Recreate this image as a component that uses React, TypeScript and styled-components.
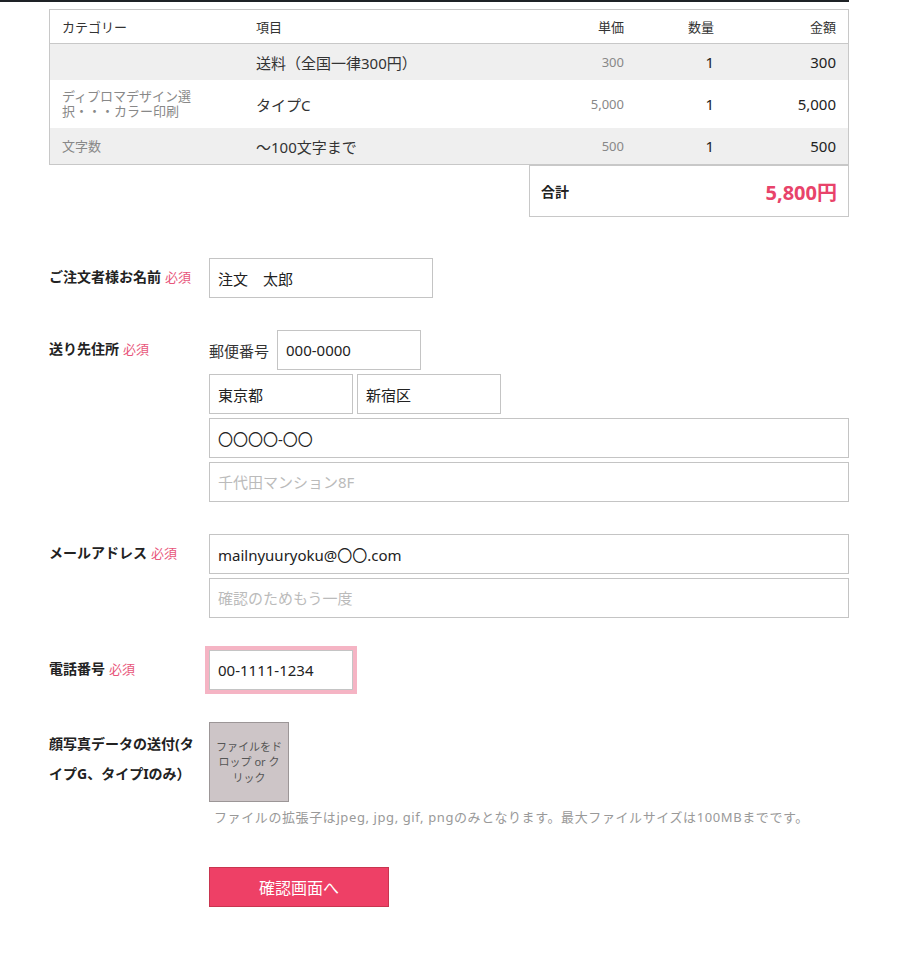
import React from "react";
import styled, { createGlobalStyle } from "styled-components";

const GlobalStyle = createGlobalStyle`
  html, body { margin: 0; padding: 0; background: #fff; }
  body {
    font-family: "Noto Sans", "Noto Sans CJK JP", sans-serif;
    color: #333;
  }
  * { box-sizing: border-box; }
`;

const Page = styled.div`
  border-top: 2px solid #1e2226;
  padding: 7px 0 57px 49px;
  width: 849px;
`;

const OrderTable = styled.div`
  width: 800px;
  border: 1px solid #c8c8c8;
`;

const GridRow = styled.div<{ $bg?: string; $h: number; $head?: boolean }>`
  display: grid;
  grid-template-columns: 194px 312px 80px 90px 1fr;
  align-items: center;
  min-height: ${(p) => p.$h}px;
  background: ${(p) => p.$bg || "#fff"};
  border-bottom: ${(p) => (p.$head ? "1px solid #c8c8c8" : "none")};
`;

const HeadCell = styled.div<{ $right?: boolean }>`
  padding: 0 12px;
  font-size: 13px;
  color: #333;
  text-align: ${(p) => (p.$right ? "right" : "left")};
`;

const CategoryCell = styled.div`
  padding: 8px 50px 8px 12px;
  font-size: 13px;
  line-height: 15px;
  color: #888;
`;

const ItemCell = styled.div`
  padding: 0 12px;
  font-size: 15px;
  color: #333;
`;

const PriceCell = styled.div`
  padding: 0 12px;
  font-size: 13px;
  color: #888;
  text-align: right;
`;

const NumCell = styled.div`
  padding: 0 12px;
  font-size: 15px;
  color: #222;
  text-align: right;
`;

const TotalBox = styled.div`
  width: 320px;
  height: 52px;
  margin-left: 480px;
  border: 1px solid #c8c8c8;
  display: flex;
  align-items: center;
  justify-content: space-between;
  padding: 0 11px;
`;

const TotalLabel = styled.span`
  font-size: 14px;
  font-weight: bold;
  color: #222;
`;

const TotalValue = styled.span`
  font-size: 20px;
  font-weight: bold;
  color: #e8436a;
`;

const Form = styled.form`
  margin-top: 41px;
  width: 800px;
`;

const FormRow = styled.div`
  display: flex;
  margin-bottom: 32px;
`;

const Label = styled.div<{ $pt?: number }>`
  width: 160px;
  flex-shrink: 0;
  padding: ${(p) => p.$pt ?? 4}px 8px 0 0;
  font-size: 14px;
  font-weight: bold;
  line-height: 30px;
  color: #222;
`;

const Required = styled.span`
  font-size: 13px;
  font-weight: normal;
  color: #e8557a;
  margin-left: 4px;
`;

const Fields = styled.div`
  display: flex;
  flex-direction: column;
  gap: 4px;
  flex: 1;
`;

const InlineFields = styled.div`
  display: flex;
  align-items: center;
  gap: 4px;
`;

const SubLabel = styled.span`
  font-size: 15px;
  color: #333;
  margin-right: 4px;
`;

const TextInput = styled.input<{ $w?: number; $highlight?: boolean }>`
  width: ${(p) => (p.$w ? `${p.$w}px` : "100%")};
  height: 40px;
  border: 1px solid #c4c4c4;
  border-radius: 0;
  padding: 0 8px;
  font-family: inherit;
  font-size: 15px;
  color: #222;
  background: #fff;
  outline: none;
  box-shadow: ${(p) => (p.$highlight ? "0 0 0 4px #f5b4c4" : "none")};
  &::placeholder { color: #bbb; }
`;

const DropBox = styled.div`
  width: 80px;
  height: 80px;
  background: #cdc5c7;
  border: 1px solid #9c9697;
  display: flex;
  align-items: center;
  justify-content: center;
  text-align: center;
  padding: 0 5px;
  font-size: 11px;
  line-height: 15.5px;
  color: #555;
  cursor: pointer;
`;

const Note = styled.p`
  margin: 0;
  padding-left: 5px;
  font-size: 13px;
  letter-spacing: 0.6px;
  line-height: 22px;
  color: #999;
`;

const SubmitRow = styled.div`
  padding: 7px 0 0 160px;
`;

const SubmitButton = styled.button`
  width: 180px;
  height: 40px;
  background: #ee4066;
  border: 1px solid #c8354f;
  color: #fff;
  font-family: inherit;
  font-size: 16px;
  cursor: pointer;
`;

const rows = [
  { cat: "", item: "送料（全国一律300円）", price: "300", qty: "1", amount: "300", bg: "#efefef", h: 36 },
  { cat: "ディプロマデザイン選択・・・カラー印刷", item: "タイプC", price: "5,000", qty: "1", amount: "5,000", bg: "#fff", h: 48 },
  { cat: "文字数", item: "〜100文字まで", price: "500", qty: "1", amount: "500", bg: "#efefef", h: 36 },
];

export default function App() {
  return (
    <>
      <GlobalStyle />
      <Page>
        <OrderTable>
          <GridRow $h={34} $head>
            <HeadCell>カテゴリー</HeadCell>
            <HeadCell>項目</HeadCell>
            <HeadCell $right>単価</HeadCell>
            <HeadCell $right>数量</HeadCell>
            <HeadCell $right>金額</HeadCell>
          </GridRow>
          {rows.map((r, i) => (
            <GridRow key={i} $bg={r.bg} $h={r.h}>
              <CategoryCell>{r.cat}</CategoryCell>
              <ItemCell>{r.item}</ItemCell>
              <PriceCell>{r.price}</PriceCell>
              <NumCell>{r.qty}</NumCell>
              <NumCell>{r.amount}</NumCell>
            </GridRow>
          ))}
        </OrderTable>
        <TotalBox>
          <TotalLabel>合計</TotalLabel>
          <TotalValue>5,800円</TotalValue>
        </TotalBox>

        <Form onSubmit={(e) => e.preventDefault()}>
          <FormRow>
            <Label>
              ご注文者様お名前<Required>必須</Required>
            </Label>
            <Fields>
              <TextInput $w={224} defaultValue="注文　太郎" />
            </Fields>
          </FormRow>

          <FormRow>
            <Label>
              送り先住所<Required>必須</Required>
            </Label>
            <Fields>
              <InlineFields>
                <SubLabel>郵便番号</SubLabel>
                <TextInput $w={144} defaultValue="000-0000" />
              </InlineFields>
              <InlineFields>
                <TextInput $w={144} defaultValue="東京都" />
                <TextInput $w={144} defaultValue="新宿区" />
              </InlineFields>
              <TextInput defaultValue="〇〇〇〇-〇〇" />
              <TextInput placeholder="千代田マンション8F" />
            </Fields>
          </FormRow>

          <FormRow>
            <Label>
              メールアドレス<Required>必須</Required>
            </Label>
            <Fields>
              <TextInput defaultValue="mailnyuuryoku@〇〇.com" />
              <TextInput placeholder="確認のためもう一度" />
            </Fields>
          </FormRow>

          <FormRow>
            <Label>
              電話番号<Required>必須</Required>
            </Label>
            <Fields>
              <TextInput $w={144} $highlight defaultValue="00-1111-1234" />
            </Fields>
          </FormRow>

          <FormRow>
            <Label $pt={7}>顔写真データの送付(タイプG、タイプIのみ）</Label>
            <Fields>
              <DropBox>ファイルをドロップ or クリック</DropBox>
              <Note>
                ファイルの拡張子はjpeg, jpg, gif, pngのみとなります。最大ファイルサイズは100MBまでです。
              </Note>
            </Fields>
          </FormRow>

          <SubmitRow>
            <SubmitButton type="submit">確認画面へ</SubmitButton>
          </SubmitRow>
        </Form>
      </Page>
    </>
  );
}
